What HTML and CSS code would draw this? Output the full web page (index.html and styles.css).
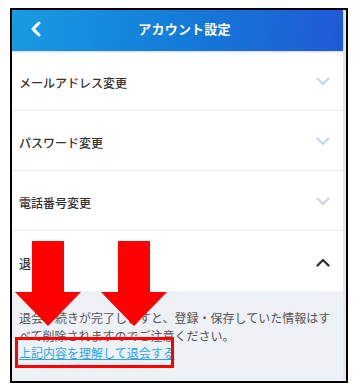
FILE: index.html
```html
<!DOCTYPE html>
<html lang="ja">
<head>
<meta charset="utf-8">
<link rel="stylesheet" href="styles.css">
</head>
<body>
<div class="frame">
  <div class="app">
    <header class="header">
      <span class="back">
        <svg width="12" height="16" viewBox="0 0 12 16"><path d="M9 2 L3 8 L9 14" fill="none" stroke="#fff" stroke-width="3" stroke-linecap="round" stroke-linejoin="round"/></svg>
      </span>
      <h1 class="title">アカウント設定</h1>
      <span class="spacer"></span>
    </header>
    <div class="row">
      <span class="label">メールアドレス変更</span>
      <svg class="chev" width="14" height="9" viewBox="0 0 14 9"><path d="M1.5 1.5 L7 7 L12.5 1.5" fill="none" stroke="#c9d6e4" stroke-width="2.2" stroke-linecap="round" stroke-linejoin="round"/></svg>
    </div>
    <div class="row">
      <span class="label">パスワード変更</span>
      <svg class="chev" width="14" height="9" viewBox="0 0 14 9"><path d="M1.5 1.5 L7 7 L12.5 1.5" fill="none" stroke="#c9d6e4" stroke-width="2.2" stroke-linecap="round" stroke-linejoin="round"/></svg>
    </div>
    <div class="row">
      <span class="label">電話番号変更</span>
      <svg class="chev" width="14" height="9" viewBox="0 0 14 9"><path d="M1.5 1.5 L7 7 L12.5 1.5" fill="none" stroke="#c9d6e4" stroke-width="2.2" stroke-linecap="round" stroke-linejoin="round"/></svg>
    </div>
    <div class="row row-open">
      <span class="label">退会</span>
      <svg class="chev" width="14" height="9" viewBox="0 0 14 9"><path d="M1.5 7.5 L7 2 L12.5 7.5" fill="none" stroke="#333" stroke-width="2.4" stroke-linecap="round" stroke-linejoin="round"/></svg>
    </div>
    <div class="panel">
      <p class="notice">退会手続きが完了しますと、登録・保存していた情報はすべて削除されますのでご注意ください。</p>
      <a class="link" href="#">上記内容を理解して退会する</a>
    </div>
  </div>
  <div class="scrollbar"></div>
</div>
<svg class="arrows" width="356" height="392" viewBox="0 0 356 392">
  <rect x="32" y="241" width="32" height="52" fill="#ff0000"/>
  <polygon points="15,292 81,292 48,326" fill="#ff0000"/>
  <rect x="118" y="241" width="32" height="52" fill="#ff0000"/>
  <polygon points="101,292 167,292 134,326" fill="#ff0000"/>
</svg>
<div class="highlight"></div>
</body>
</html>
```

FILE: styles.css
```css
* { box-sizing: border-box; }
html, body { margin: 0; padding: 0; background: #fff; }
body {
  position: relative;
  width: 356px;
  height: 392px;
  overflow: hidden;
  font-family: "Noto Sans CJK JP", "Noto Sans", sans-serif;
}
.frame {
  margin: 8px 0 0 10px;
  width: 338px;
  height: 375px;
  border: 2px solid #000;
  display: flex;
  background: #fff;
}
.app {
  flex: 1;
  display: flex;
  flex-direction: column;
  min-width: 0;
}
.scrollbar {
  width: 3px;
  background: #e4e6ea;
}
.header {
  height: 41px;
  display: flex;
  align-items: center;
  padding-bottom: 4px;
  background: linear-gradient(100deg, #189ce2 0%, #1479d8 55%, #2159d6 100%);
  box-shadow: 0 1px 2px rgba(0, 0, 0, 0.18);
  position: relative;
  z-index: 1;
}
.back {
  width: 30px;
  display: flex;
  justify-content: flex-end;
  padding-top: 1px;
}
.title {
  flex: 1;
  margin: 0;
  text-align: center;
  color: #fff;
  font-size: 13px;
  font-weight: 700;
  padding-left: 14px;
  letter-spacing: 0.2px;
}
.spacer { width: 30px; }
.row {
  height: 60px;
  display: flex;
  align-items: center;
  justify-content: space-between;
  padding: 4px 13px 0 7px;
  border-bottom: 1px solid #e8ecf2;
}
.row-open { border-bottom: none; }
.label {
  font-size: 12px;
  color: #333;
  font-weight: 500;
}
.chev { display: block; margin-top: -2px; }
.panel {
  flex: 1;
  background: #edf0f5;
  padding: 18px 12px 0 7px;
  font-size: 12px;
  line-height: 17.5px;
}
.notice {
  margin: 0;
  color: #555;
}
.link {
  color: #2aa6e6;
  text-decoration: underline;
}
.arrows {
  position: absolute;
  left: 0;
  top: 0;
  pointer-events: none;
}
.highlight {
  position: absolute;
  left: 15px;
  top: 337px;
  width: 159px;
  height: 31px;
  border: 3px solid #ff0000;
  pointer-events: none;
}
```
